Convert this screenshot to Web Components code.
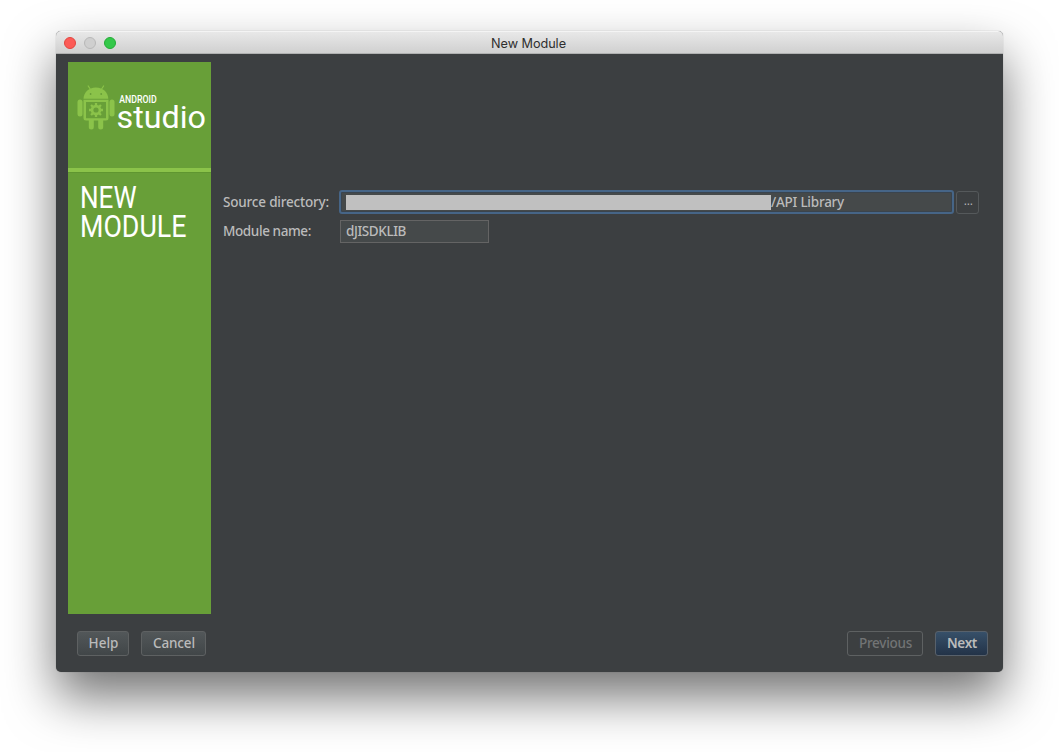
<!DOCTYPE html>
<html lang="en">
<head>
<meta charset="utf-8">
<title>New Module</title>
<style>
html, body { margin: 0; background: #fff; }
body { width: 1059px; height: 752px; overflow: hidden; padding: 31px 0 0 56px; box-sizing: border-box; font: 500 13.5px/20px "Noto Sans", "Open Sans", sans-serif; color: #bbbbbb; }
</style>
</head>
<body>
<wizard-window></wizard-window>
<script>
const define = (name, html, ready) => customElements.define(name, class extends HTMLElement {
  constructor() {
    super();
    const t = document.createElement('template');
    t.innerHTML = html;
    this.attachShadow({ mode: 'open' }).append(t.content.cloneNode(true));
  }
  connectedCallback() { if (ready) ready(this); }
});

/* Label tracked so that it fills the width given in its "w" attribute. */
define('fit-label', `
<style>:host { display: inline-block; white-space: nowrap; } span { display: inline-block; }</style>
<span><slot></slot></span>`, el => {
  const s = el.shadowRoot.querySelector('span');
  const want = parseFloat(el.getAttribute('w'));
  const n = el.textContent.length;
  s.style.letterSpacing = ((want - s.getBoundingClientRect().width) / n) + 'px';
  el.style.width = want + 'px';
});

define('title-bar', `
<style>
:host { display: grid; grid-template-columns: 1fr auto 1fr; align-items: center; height: 23px; box-sizing: border-box;
  background: linear-gradient(#e8e8e8, #d0d0d0); border-top: 1px solid #f4f4f4; border-bottom: 1px solid #b0b1b1; border-radius: 5px 5px 0 0;
  font: 400 12.7px/20px Inter, sans-serif; color: #2f2f2f; }
.dots { display: flex; gap: 8px; padding-left: 8px; }
i { width: 12px; height: 12px; border-radius: 50%; box-sizing: border-box; border: 1px solid #e2463f; background: #fc5b57; }
i:nth-child(2) { background: #cfcfcf; border-color: #b8b8b8; }
i:nth-child(3) { background: #34c84a; border-color: #24ac36; }
::slotted(*) { margin: 2px 2px 0 0; }
</style>
<div class="dots"><i></i><i></i><i></i></div><slot></slot><div></div>`);

define('studio-logo', `
<style>:host { display: block; height: 106px; } svg { display: block; }</style>
<svg width="143" height="106" viewBox="68 62 143 106">
  <g fill="#8bc34a">
    <path d="M83.5 98.8c.2-6 5-11.2 12.4-11.2s12.200 5.200 12.400 11.200z"/>
    <path d="M88.200 86l3 4.500M103.600 86l-3 4.500" stroke="#8bc34a" stroke-width="1.200" stroke-linecap="round"/>
    <rect x="77.500" y="99.500" width="5" height="17" rx="2.500"/>
    <rect x="109.500" y="99.500" width="5" height="17" rx="2.500"/>
    <path fill-rule="evenodd" d="M83.500 99.700h25v18.300a2.500 2.500 0 0 1-2.500 2.500H86a2.500 2.500 0 0 1-2.500-2.500zM86 102v16.200h20V102z"/>
    <path d="M88.800 120h5v7a2.500 2.500 0 0 1-5 0zM98.200 120h5v7a2.500 2.500 0 0 1-5 0z"/>
    <circle cx="96" cy="110" r="5.300"/>
    <path d="M96 103v14M89 110h14M91.050 105.050l9.900 9.900M100.950 105.050l-9.900 9.900" stroke="#8bc34a" stroke-width="2.300"/>
  </g>
  <circle cx="96" cy="110" r="2.600" fill="#689f38"/>
  <circle cx="90.600" cy="94" r=".9" fill="#689f38"/><circle cx="101.200" cy="94" r=".9" fill="#689f38"/>
  <g fill="#fff" font-family="Roboto, sans-serif">
    <text x="119.300" y="103" font-size="10.500" font-weight="500" textLength="37.500" lengthAdjust="spacingAndGlyphs">ANDROID</text>
    <text x="116.500" y="128.300" font-size="32" font-weight="400" textLength="89.500" lengthAdjust="spacingAndGlyphs">studio</text>
  </g>
</svg>`);

define('wizard-sidebar', `
<style>
:host { display: block; background: #689f38; }
.stripe { height: 4px; background: #8bc34a; border-bottom: 1px solid #5f9630; }
svg { display: block; }
</style>
<studio-logo></studio-logo><div class="stripe"></div>
<svg width="143" height="80" viewBox="68 173 143 80" fill="#fff" font-family="Roboto, sans-serif" font-size="32" font-weight="400">
  <text x="80" y="207.500" textLength="56.500" lengthAdjust="spacingAndGlyphs">NEW</text>
  <text x="80" y="236.500" textLength="106.500" lengthAdjust="spacingAndGlyphs">MODULE</text>
</svg>`);

define('text-field', `
<style>
:host { display: flex; align-items: center; box-sizing: border-box; height: 23px; padding-left: 5px; background: #45494a; border: 1px solid #646464; }
:host([focused]) { height: 24px; margin-left: -1px; padding-left: 5px; border: 2px solid #466587; border-radius: 3px; box-shadow: inset 0 0 0 1px #3a444e; }
</style><slot></slot>`);

define('push-button', `
<style>
:host { display: flex; align-items: center; justify-content: center; box-sizing: border-box; height: 25px; border: 1px solid #5e6162; border-radius: 3px;
  background: linear-gradient(#525759, #414648); }
:host([primary]) { background: linear-gradient(#375069, #233348); font-weight: 600; border-color: #58616b; }
:host([disabled]) { background: none; color: #727475; }
:host([small]) { height: 23px; background: none; font-size: 10px; border-color: #55595b; }
:host(:not([small])) ::slotted(*) { margin: -1px -1px 0 0; }
:host([small]) ::slotted(*) { margin: -2px -2px 0 0; }
</style><slot></slot>`);

define('wizard-form', `
<style>
:host { display: grid; grid-template-columns: 117px 614px 23px; grid-auto-rows: 24px; row-gap: 5px; align-content: start; padding: 128px 0 0 12px; }
:host > * { align-self: center; }
text-field { align-self: end; }
.name { width: 149px; }
.mask { width: 425px; height: 15px; background: #c0c0c0; }
push-button { margin-left: 2px; width: 23px; }
</style>
<fit-label w="106">Source directory:</fit-label>
<text-field focused><span class="mask"></span><fit-label w="73">/API Library</fit-label></text-field>
<push-button small><fit-label w="9">...</fit-label></push-button>
<fit-label w="88">Module name:</fit-label>
<text-field class="name"><fit-label w="60">dJISDKLIB</fit-label></text-field>`);

define('wizard-footer', `
<style>
:host { display: flex; gap: 12px; padding: 17px 15px 0 21px; height: 41px; }
.gap { flex: 1; }
</style>
<push-button style="width:52px"><fit-label w="30">Help</fit-label></push-button>
<push-button style="width:65px"><fit-label w="42">Cancel</fit-label></push-button>
<div class="gap"></div>
<push-button disabled style="width:76px"><fit-label w="53">Previous</fit-label></push-button>
<push-button primary style="width:53px"><fit-label w="30">Next</fit-label></push-button>`);

define('wizard-window', `
<style>
:host { display: flex; flex-direction: column; width: 947px; height: 641px; background: #3c3f41; border-radius: 5px;
  box-shadow: 0 25px 50px rgba(0,0,0,.55), 0 0 1px rgba(0,0,0,.4); }
main { display: grid; grid-template-columns: 143px 1fr; height: 552px; padding: 8px 0 0 12px; }
</style>
<title-bar><fit-label w="75">New Module</fit-label></title-bar>
<main><wizard-sidebar></wizard-sidebar><wizard-form></wizard-form></main>
<wizard-footer></wizard-footer>`);
</script>
</body>
</html>
